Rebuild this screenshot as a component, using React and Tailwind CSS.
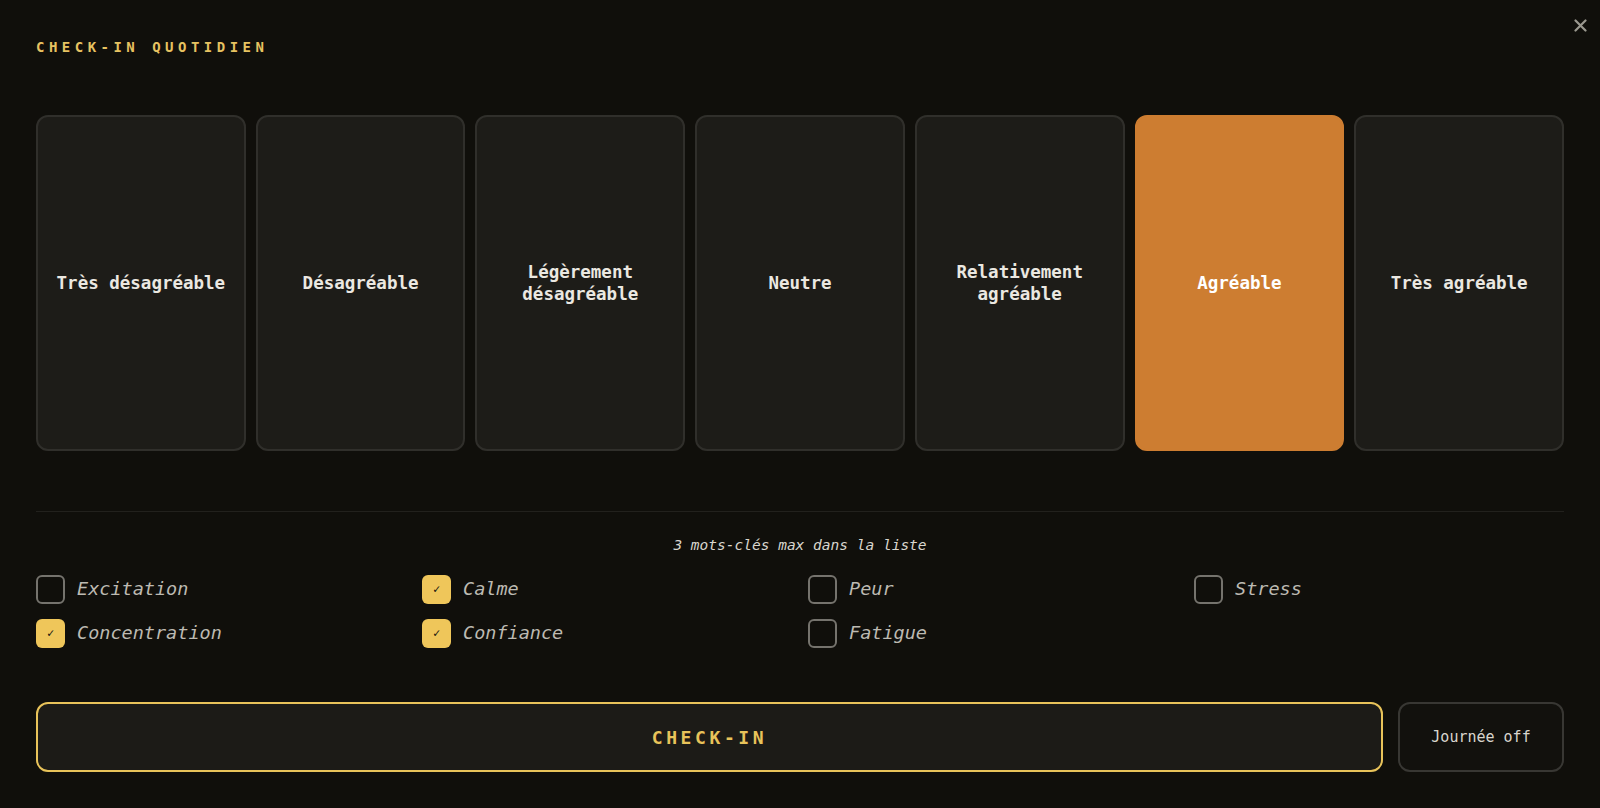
import React, { useState } from "react";

const moods = [
  ["Très désagréable"],
  ["Désagréable"],
  ["Légèrement", "désagréable"],
  ["Neutre"],
  ["Relativement", "agréable"],
  ["Agréable"],
  ["Très agréable"],
];

const keywords = [
  ["Excitation", false],
  ["Calme", true],
  ["Peur", false],
  ["Stress", false],
  ["Concentration", true],
  ["Confiance", true],
  ["Fatigue", false],
];

const mono = { fontFamily: '"DejaVu Sans Mono", "Liberation Mono", monospace' };

export default function App() {
  const [selected, setSelected] = useState(5);
  const [checked, setChecked] = useState(keywords.map((k) => k[1]));
  return (
    <div
      className="relative w-[1600px] h-[808px] bg-[#100f0b] px-[36px] pt-[37px] overflow-hidden"
      style={mono}
    >
      <button className="absolute top-[17px] right-[12px] w-[16px] h-[16px] flex items-center justify-center text-[#9a988f]">
        <svg width="13" height="13" viewBox="0 0 13 13" fill="none" stroke="currentColor" strokeWidth="2.2" strokeLinecap="round">
          <path d="M1.5 1.5 L11.5 11.5 M11.5 1.5 L1.5 11.5" />
        </svg>
      </button>

      <div className="h-[20px] text-[14px] leading-[20px] font-semibold tracking-[0.32em] text-[#e7c261]">
        CHECK-IN QUOTIDIEN
      </div>

      <div className="mt-[58px] h-[336px] grid grid-cols-7 gap-[10px]">
        {moods.map((lines, i) => {
          const active = i === selected;
          return (
            <button
              key={i}
              onClick={() => setSelected(i)}
              className={
                active
                  ? "rounded-[12px] bg-[#cd7d31] border-2 border-[#cd7d31] flex flex-col items-center justify-center text-white text-[17.5px] leading-[22px] font-bold"
                  : "rounded-[12px] bg-[#1d1c18] border-2 border-[#302f2b] flex flex-col items-center justify-center text-[#ebe8e1] text-[17.5px] leading-[22px] font-bold"
              }
            >
              {lines.map((l) => (
                <span key={l}>{l}</span>
              ))}
            </button>
          );
        })}
      </div>

      <div className="mt-[60px] border-t border-[#22211d]" />

      <div className="mt-[23px] h-[20px] text-center text-[14.5px] leading-[20px] italic text-[#d9d6ce]">
        3 mots-clés max dans la liste
      </div>

      <div className="mt-[20px] grid grid-cols-4 gap-x-4 gap-y-4">
        {keywords.map(([label], i) => (
          <label
            key={label}
            className="flex items-center gap-3 h-[28px] cursor-pointer"
            onClick={() => setChecked((c) => c.map((v, j) => (j === i ? !v : v)))}
          >
            {checked[i] ? (
              <span className="w-[29px] h-[29px] rounded-[6px] bg-[#efc65a] flex items-center justify-center text-[#15130e] text-[12px] font-bold">
                ✓
              </span>
            ) : (
              <span className="w-[29px] h-[29px] rounded-[6px] border-2 border-[#75736d]" />
            )}
            <span className="italic text-[18.5px] text-[#bdbab2]">{label}</span>
          </label>
        ))}
      </div>

      <div className="mt-[55px] flex gap-[15px] h-[70px]">
        <button className="flex-1 rounded-[12px] border-2 border-[#e8c35a] bg-[#1c1b17] text-[#e8c35a] text-[18px] font-bold tracking-[0.2em]">
          CHECK-IN
        </button>
        <button className="w-[166px] rounded-[12px] border-2 border-[#383733] bg-[#12110d] text-[#d9d6cd] text-[15px]">
          Journée off
        </button>
      </div>
    </div>
  );
}
